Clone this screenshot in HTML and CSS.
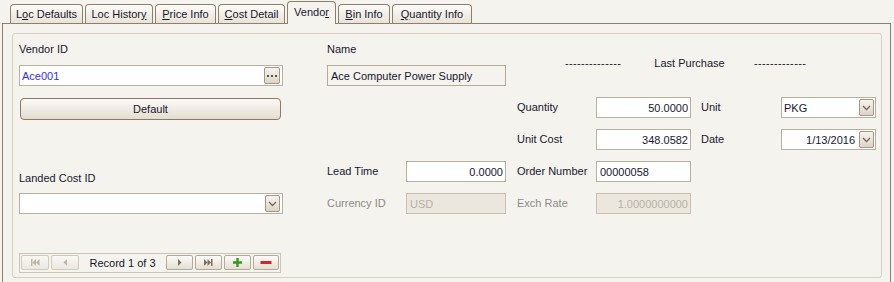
FILE: index.html
```
<!DOCTYPE html>
<html lang="en">
<head>
<meta charset="UTF-8">
<title>Item Vendor</title>
<link rel="stylesheet" href="styles.css">
</head>
<body>

<div class="tabs">
  <div class="tab t-locdef">L<u>o</u>c Defaults</div>
  <div class="tab t-lochist">Loc Histor<u>y</u></div>
  <div class="tab t-price"><u>P</u>rice Info</div>
  <div class="tab t-cost"><u>C</u>ost Detail</div>
  <div class="tab t-vendor active">Vendo<u>r</u></div>
  <div class="tab t-bin"><u>B</u>in Info</div>
  <div class="tab t-qty"><u>Q</u>uantity Info</div>
</div>

<div class="panel">
  <div class="group">

    <div class="left">
      <label class="lbl vendor-lbl">Vendor ID</label>
      <div class="field">
        <input type="text" class="link" value="Ace001">
        <span class="mini">
          <svg width="14" height="15" viewBox="0 0 14 15"><rect x="2" y="7" width="2" height="2" fill="#5c5248"/><rect x="6" y="7" width="2" height="2" fill="#5c5248"/><rect x="10" y="7" width="2" height="2" fill="#5c5248"/></svg>
        </span>
      </div>
      <button class="default-btn">Default</button>
      <label class="lbl landed-lbl">Landed Cost ID</label>
      <div class="field">
        <input type="text" value="">
        <span class="mini drop">
          <svg width="13" height="15" viewBox="0 0 13 15"><polyline points="3,6 6.5,9.5 10,6" fill="none" stroke="#75695a" stroke-width="1.3"/></svg>
        </span>
      </div>
      <div class="nav">
        <span class="nb dis">
          <svg width="26" height="13" viewBox="0 0 26 13"><rect x="9" y="3" width="1.5" height="7" fill="#bdb5a9"/><polygon points="14,3 10.5,6.5 14,10" fill="#bdb5a9"/><polygon points="17.5,3 14,6.5 17.5,10" fill="#bdb5a9"/></svg>
        </span>
        <span class="nb dis">
          <svg width="26" height="13" viewBox="0 0 26 13"><polygon points="15,3 11.5,6.5 15,10" fill="#bdb5a9"/></svg>
        </span>
        <span class="rec">Record 1 of 3</span>
        <span class="nb">
          <svg width="25" height="13" viewBox="0 0 25 13"><polygon points="11,3 14.5,6.5 11,10" fill="#7d7060"/></svg>
        </span>
        <span class="nb">
          <svg width="25" height="13" viewBox="0 0 25 13"><polygon points="8,3 11.5,6.5 8,10" fill="#7d7060"/><polygon points="11.5,3 15,6.5 11.5,10" fill="#7d7060"/><rect x="15" y="3" width="1.5" height="7" fill="#7d7060"/></svg>
        </span>
        <span class="nb">
          <svg width="25" height="13" viewBox="0 0 25 13"><path d="M8 6.5H17M12.5 2V11" stroke="#2f9a1d" stroke-width="2.4"/></svg>
        </span>
        <span class="nb">
          <svg width="24" height="13" viewBox="0 0 24 13"><rect x="6.5" y="5" width="11" height="3" fill="#d52525"/></svg>
        </span>
      </div>
    </div>

    <div class="form-grid">
      <label class="gl top a-namel">Name</label>
      <input type="text" class="box ro a-name" value="Ace Computer Power Supply" readonly>

      <div class="head">
        <span class="dash d1">--------------</span>
        <span class="head-text">Last Purchase</span>
        <span class="dash d2">-------------</span>
      </div>

      <label class="gl a-qtyl">Quantity</label>
      <input type="text" class="box num a-qty" value="50.0000">
      <label class="gl a-unitl">Unit</label>
      <div class="field a-unit">
        <input type="text" value="PKG">
        <span class="mini drop">
          <svg width="13" height="15" viewBox="0 0 13 15"><polyline points="3,6 6.5,9.5 10,6" fill="none" stroke="#75695a" stroke-width="1.3"/></svg>
        </span>
      </div>

      <label class="gl a-costl">Unit Cost</label>
      <input type="text" class="box num a-cost" value="348.0582">
      <label class="gl a-datel">Date</label>
      <div class="field a-date">
        <input type="text" class="num" value="1/13/2016">
        <span class="mini drop">
          <svg width="13" height="15" viewBox="0 0 13 15"><polyline points="3,6 6.5,9.5 10,6" fill="none" stroke="#75695a" stroke-width="1.3"/></svg>
        </span>
      </div>

      <label class="gl a-leadl">Lead Time</label>
      <input type="text" class="box num a-lead" value="0.0000">
      <label class="gl a-ordl">Order Number</label>
      <input type="text" class="box a-ord" value="00000058">

      <label class="gl off a-curl">Currency ID</label>
      <input type="text" class="box a-cur" value="USD" disabled>
      <label class="gl off a-exl">Exch Rate</label>
      <input type="text" class="box num a-ex" value="1.0000000000" disabled>
    </div>

  </div>
</div>

</body>
</html>
```

FILE: styles.css
```
body {
  margin: 0;
  padding: 0 3px 0 2px;
  background-color: #f5f3ee;
  font-family: "Liberation Sans", Arial, sans-serif;
  font-size: 11px;
  color: #17172f;
}
u {
  text-decoration: underline;
}

/* tab strip */
.tabs {
  display: flex;
  align-items: flex-end;
  height: 23px;
  padding-left: 8px;
}
.tab {
  box-sizing: border-box;
  height: 19px;
  margin-right: 2px;
  border: 1px solid #8d7f6d;
  border-bottom: none;
  border-radius: 4px 4px 0 0;
  background: linear-gradient(#fdfcfa, #e9e3d6);
  line-height: 18px;
  text-align: center;
  white-space: nowrap;
}
.tab.active {
  position: relative;
  z-index: 1;
  height: 23px;
  margin-bottom: -1px;
  background: #f5f3ee;
  line-height: 21px;
}
.t-locdef { width: 73px; }
.t-lochist { width: 68px; }
.t-price { width: 61px; }
.t-cost { width: 67px; }
.t-vendor { width: 49px; }
.t-bin { width: 52px; }
.t-qty { width: 80px; }

/* panel + group box */
.panel {
  box-sizing: border-box;
  height: 259px;
  border: 1px solid #8d7f6d;
  border-bottom: none;
  padding: 9px 8px 0 9px;
}
.group {
  display: flex;
  border: 1px solid #d6cfc2;
  border-radius: 3px;
  padding: 0 0 4px 6px;
}

/* left column */
.left {
  width: 264px;
  display: flex;
  flex-direction: column;
  align-items: flex-start;
}
.lbl {
  display: block;
  line-height: 14px;
}
.vendor-lbl {
  margin-top: 8px;
  margin-bottom: 9px;
}
.landed-lbl {
  margin-top: 51px;
  margin-bottom: 8px;
}
.left .field {
  width: 264px;
  padding-right: 2px;
}

.field {
  box-sizing: border-box;
  display: flex;
  align-items: center;
  height: 21px;
  border: 1px solid #bab09f;
  background-color: #fff;
  padding-right: 1px;
}
.field input {
  flex: 1;
  min-width: 0;
  height: 100%;
  border: none;
  outline: none;
  background: transparent;
  font: inherit;
  color: #17172f;
  padding: 0 3px 0 2px;
}
.field input.link {
  color: #3030f5;
}
.field input.num {
  text-align: right;
  padding-right: 4px;
}
.mini {
  box-sizing: border-box;
  flex: none;
  width: 16px;
  height: 17px;
  display: flex;
  align-items: center;
  justify-content: center;
  border: 1px solid #a3978a;
  border-radius: 2px;
  background: linear-gradient(#f7f4ee, #ddd5c6);
}
.mini.drop {
  width: 15px;
}

.default-btn {
  width: 261px;
  height: 22px;
  margin: 12px 0 0 1px;
  padding: 0;
  border: 1px solid #8a7b67;
  border-radius: 4px;
  background: linear-gradient(#fcfbf8, #e4ddcf);
  font: inherit;
  color: #17172f;
}

/* record navigator */
.nav {
  box-sizing: border-box;
  width: 262px;
  height: 20px;
  margin-top: 39px;
  display: flex;
  align-items: flex-start;
  gap: 2px;
  padding: 1px 1px 0 1px;
  border: 1px solid #ccc4b5;
}
.nb {
  box-sizing: border-box;
  width: 27px;
  height: 15px;
  display: flex;
  align-items: center;
  justify-content: center;
  border: 1px solid #b4aa99;
  border-radius: 2px;
  background: linear-gradient(#fcfbf8, #e5dfd2);
}
.nb.dis {
  width: 28px;
  border-color: #d2cabd;
  background: linear-gradient(#f9f8f4, #ece8e0);
}
.nb:last-child {
  width: 26px;
}
.rec {
  width: 83px;
  text-align: center;
  line-height: 16px;
  white-space: nowrap;
}

/* right side form */
.form-grid {
  margin-left: 44px;
  display: grid;
  grid-template-columns: 79px 100px 11px 79px 95px 10px 80px 95px;
  grid-template-rows: 20px repeat(5, 21px);
  row-gap: 11px;
  align-content: start;
  grid-template-areas:
    "namel namel . head head head head head"
    "name  name  . head head head head head"
    ".     .     . qtyl qty  .    unitl unit"
    ".     .     . costl cost .   datel date"
    "leadl lead  . ordl ord  .    .    ."
    "curl  cur   . exl  ex   .    .    .";
}
.gl {
  line-height: 21px;
  white-space: nowrap;
}
.gl.top {
  line-height: 14px;
  padding-top: 8px;
}
.gl.off {
  color: #8b8b8b;
}
.box {
  box-sizing: border-box;
  width: 100%;
  height: 21px;
  margin: 0;
  border: 1px solid #bab09f;
  border-radius: 0;
  background-color: #fff;
  font: inherit;
  color: #17172f;
  padding: 0 2px 0 3px;
  outline: none;
}
.box.ro {
  background-color: #f5f3ee;
  border-color: #b5aa9a;
}
.box.num {
  text-align: right;
}
.box:disabled {
  background-color: #ebe7df;
  border-color: #c8bfb0;
  color: #b8b0a3;
}

.head {
  grid-area: head;
  display: flex;
  padding: 22px 0 0 48px;
  line-height: 14px;
  white-space: nowrap;
}
.dash {
  letter-spacing: 0.35px;
}
.d1 { width: 56px; margin-right: 35px; }
.head-text { width: 67px; display: flex; justify-content: center; margin-right: 31px; }
.d2 { width: 52px; }

.a-namel { grid-area: namel; }
.a-name { grid-area: name; }
.a-qtyl { grid-area: qtyl; }
.a-qty { grid-area: qty; }
.a-unitl { grid-area: unitl; }
.a-unit { grid-area: unit; }
.a-costl { grid-area: costl; }
.a-cost { grid-area: cost; }
.a-datel { grid-area: datel; }
.a-date { grid-area: date; }
.a-leadl { grid-area: leadl; }
.a-lead { grid-area: lead; }
.a-ordl { grid-area: ordl; }
.a-ord { grid-area: ord; }
.a-curl { grid-area: curl; }
.a-cur { grid-area: cur; }
.a-exl { grid-area: exl; }
.a-ex { grid-area: ex; }
```
